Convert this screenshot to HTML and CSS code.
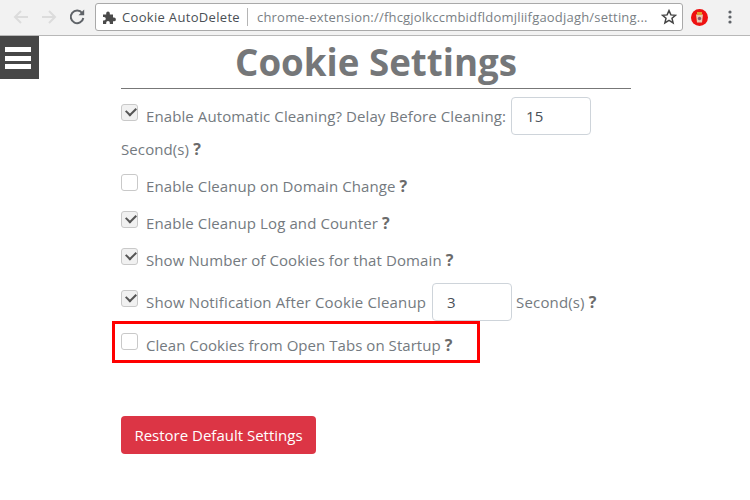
FILE: index.html
```html
<!DOCTYPE html>
<html lang="en">
<head>
<meta charset="utf-8">
<title>Cookie Settings</title>
<link rel="stylesheet" href="styles.css">
</head>
<body>
<header class="toolbar">
  <svg class="nav" width="18" height="18" viewBox="0 0 18 18"><path d="M16 9H3M9 3L3 9l6 6" fill="none" stroke="#dcdcdc" stroke-width="2"/></svg>
  <svg class="nav" width="18" height="18" viewBox="0 0 18 18"><path d="M2 9h13M9 3l6 6-6 6" fill="none" stroke="#dcdcdc" stroke-width="2"/></svg>
  <svg class="nav" width="18" height="18" viewBox="0 0 18 18"><path d="M14.2 5.2A6.3 6.3 0 1 0 15.3 10" fill="none" stroke="#5f6368" stroke-width="2"/><path d="M10.5 7.2h5.7V1.5z" fill="#5f6368"/></svg>
  <div class="omnibox">
    <svg class="puzzle" width="13" height="13" viewBox="0 0 13 13"><path d="M0 3.5h3.2V2.2a1.8 1.8 0 0 1 3.6 0v1.3H10v3h1a1.9 1.9 0 0 1 0 3.8h-1V13H6.8v-1.3a1.8 1.8 0 0 0-3.6 0V13H0V9.5h1a1.8 1.8 0 0 0 0-3.6H0z" fill="#4a4a4a"/></svg>
    <span class="ext-name">Cookie AutoDelete</span>
    <span class="divider"></span>
    <span class="url">chrome-extension://fhcgjolkccmbidfldomjliifgaodjagh/setting...</span>
    <svg width="16" height="16" viewBox="0 0 16 16"><path d="M8 1.6l1.9 4.3 4.6.4-3.5 3 1.1 4.6L8 11.4l-4.1 2.5L5 9.3l-3.5-3 4.6-.4z" fill="none" stroke="#444" stroke-width="1.5"/></svg>
  </div>
  <svg class="ext-icon" width="17" height="17" viewBox="0 0 17 17"><circle cx="8.5" cy="8.5" r="8.5" fill="#ee1111"/><path d="M5 5.5h7l-1 8H6z" fill="#e9c9b0"/><path d="M6 3h5v3H6z" fill="#e0a030"/><circle cx="8.5" cy="9.5" r="1.7" fill="#8a5a70"/></svg>
  <svg class="menu-dots" width="4" height="14" viewBox="0 0 4 14"><circle cx="2" cy="2" r="1.6" fill="#5f6368"/><circle cx="2" cy="7" r="1.6" fill="#5f6368"/><circle cx="2" cy="12" r="1.6" fill="#5f6368"/></svg>
</header>

<button class="hamburger" aria-label="Menu"><span></span><span></span><span></span></button>

<main class="content">
  <h1 class="title">Cookie Settings</h1>

  <div class="row row-first">
    <span class="box checked"></span>
    <span class="label">Enable Automatic Cleaning? Delay Before Cleaning:</span>
    <span class="field">15</span>
  </div>
  <div class="row row-seconds">Second(s) <b class="help">?</b></div>
  <div class="row row-plain">
    <span class="box"></span>
    <span class="label">Enable Cleanup on Domain Change <b class="help">?</b></span>
  </div>
  <div class="row row-plain">
    <span class="box checked"></span>
    <span class="label">Enable Cleanup Log and Counter <b class="help">?</b></span>
  </div>
  <div class="row row-plain">
    <span class="box checked"></span>
    <span class="label">Show Number of Cookies for that Domain <b class="help">?</b></span>
  </div>
  <div class="row row-notify">
    <span class="box checked"></span>
    <span class="label">Show Notification After Cookie Cleanup</span>
    <span class="field">3</span>
    <span class="after">Second(s) <b class="help">?</b></span>
  </div>
  <div class="row row-startup">
    <span class="box"></span>
    <span class="label">Clean Cookies from Open Tabs on Startup <b class="help">?</b></span>
  </div>
  <button class="restore">Restore Default Settings</button>
</main>
<div class="highlight"></div>
</body>
</html>
```

FILE: styles.css
```css
* { box-sizing: border-box; }
html, body { margin: 0; height: 100%; overflow: hidden; background: #fff; }
body { font-family: "Open Sans", "Liberation Sans", sans-serif; color: #747a80; }

.toolbar {
  height: 36px;
  background: #f2f2f2;
  border-bottom: 1px solid #b8b8b8;
  display: flex;
  align-items: center;
  padding: 0 0 1px 12px;
}
.nav { margin-right: 10px; flex: none; }
.omnibox {
  width: 588px;
  height: 28px;
  margin-left: -1px;
  background: #fff;
  border: 1px solid #a9a9a9;
  border-radius: 3px;
  display: flex;
  align-items: center;
  padding: 0 5px 0 7px;
  font-size: 13px;
  white-space: nowrap;
}
.puzzle { flex: none; margin-right: 6px; }
.ext-name { color: #4a4f55; width: 119px; letter-spacing: .32px; }
.divider { width: 1px; height: 18px; background: #b5b5b5; margin: 0 9px 0 6px; }
.url { color: #7a7f85; flex: 1; overflow: hidden; letter-spacing: .2px; }
.ext-icon { margin-left: 8px; flex: none; }
.menu-dots { margin-left: 20px; flex: none; }

.hamburger {
  position: absolute;
  left: 0;
  top: 36px;
  width: 39px;
  height: 43px;
  padding: 11px 5px 0;
  border: 0;
  background: #474747;
  display: flex;
  flex-direction: column;
  gap: 3.5px;
}
.hamburger span { display: block; width: 26px; height: 5px; flex: none; background: #fff; }

.content { width: 510px; margin-left: 121px; }
.title {
  margin: 0;
  height: 53px;
  border-bottom: 1px solid #777;
  font-size: 36.7px;
  line-height: 52px;
  font-weight: 700;
  text-align: center;
  color: #757779;
  white-space: nowrap;
}

.row { display: flex; align-items: center; font-size: 15px; line-height: 22px; white-space: pre; letter-spacing: .1px; }
.box {
  width: 17px;
  height: 17px;
  flex: none;
  margin: -8px 8px 0 0;
  border: 1px solid #c9c9c9;
  border-radius: 3px;
  background: #fff;
  position: relative;
}
.box.checked { background: #f1f1f1; }
.box.checked::after {
  content: "";
  position: absolute;
  left: 4px;
  top: 2px;
  width: 8px;
  height: 5px;
  border-left: 2px solid #555;
  border-bottom: 2px solid #555;
  transform: rotate(-45deg);
}
.help { font-size: 16px; font-weight: 700; color: #6b6b6b; }
.field {
  width: 80px;
  height: 38px;
  margin-left: 5px;
  padding-left: 14px;
  border: 1px solid #ced4da;
  border-radius: 4px;
  display: flex;
  align-items: center;
  color: #495057;
  font-size: 15px;
}
.after { margin-left: 4px; }

.row-first { margin-top: 8px; height: 38px; }
.row-seconds { height: 22px; margin-top: 3px; }
.row-plain { height: 22px; margin-top: 15px; }
.row-notify { height: 38px; margin-top: 12px; letter-spacing: .15px; }
.row-notify .field { margin-left: 6px; }
.row-startup { height: 22px; margin-top: 13px; letter-spacing: .05px; }

.restore {
  display: block;
  margin-top: 60px;
  width: 195px;
  height: 38px;
  padding: 0;
  border: 0;
  border-radius: 4px;
  background: #dc3545;
  color: #fff;
  font-family: inherit;
  font-size: 15px;
}

.highlight {
  position: absolute;
  left: 112px;
  top: 321px;
  width: 368px;
  height: 42px;
  border: 3px solid #f00;
}
```
